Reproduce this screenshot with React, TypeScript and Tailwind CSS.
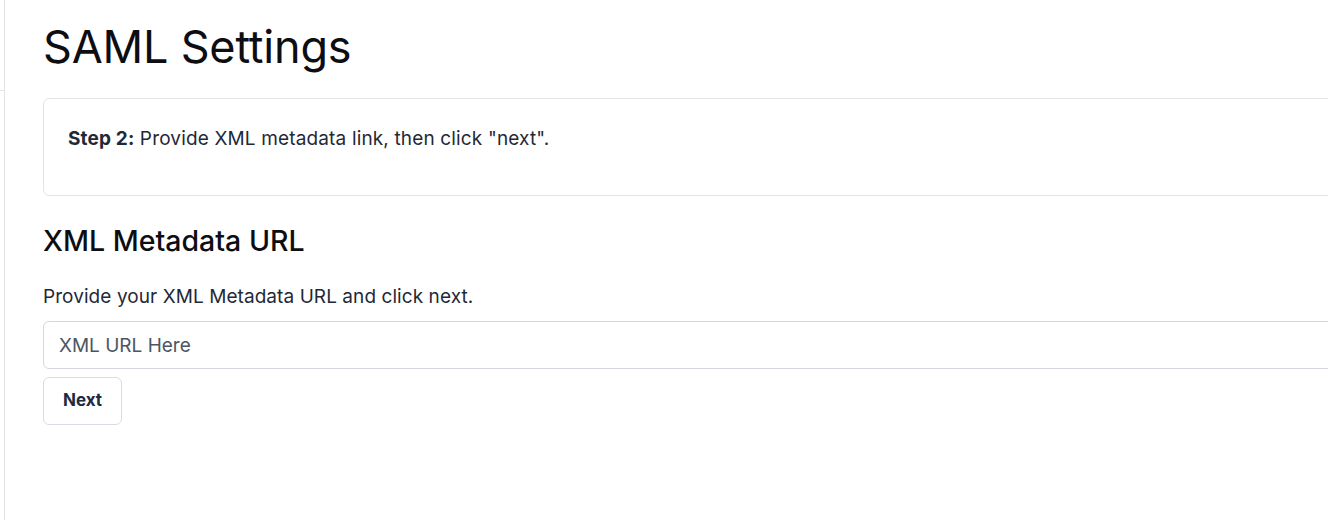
import React from "react";

export default function App() {
  return (
    <div
      className="w-[1328px] h-[520px] overflow-hidden bg-white flex"
      style={{ fontFamily: "Inter, 'Noto Sans', sans-serif" }}
    >
      <div className="w-[5px] shrink-0 border-r border-[#e4e4e7] h-full">
        <div className="h-[91px] border-b border-[#e4e4e7]" />
      </div>
      <div className="shrink-0 w-[1500px] pl-[38px] pt-[19px]">
        <h1 className="text-[45px] leading-[56px] text-[#0d0d12] tracking-[-0.2px]">SAML Settings</h1>
        <div className="mt-[23px] w-[1400px] h-[98px] border border-[#e4e4e7] rounded-[6px] px-[24px] pt-[26px]">
          <p className="text-[19px] leading-[28px] text-[#1f2937] tracking-[0.15px]">
            <b className="font-bold">Step 2:</b> Provide XML metadata link, then click "next".
          </p>
        </div>
        <h2 className="mt-[27px] text-[28.5px] leading-[36px] text-[#0d0d12] font-medium">XML Metadata URL</h2>
        <p className="mt-[25px] text-[19px] leading-[26px] text-[#1f2937] tracking-[0.07px]">Provide your XML Metadata URL and click next.</p>
        <input
          className="mt-[11px] block w-[1400px] h-[48px] border border-[#d4d7dd] rounded-[6px] px-[15px] text-[19px] text-[#1f2937] placeholder:text-[#4b5563] outline-none"
          placeholder="XML URL Here"
        />
        <button className="mt-[8px] h-[48px] w-[79px] border border-[#d9dde3] rounded-[6px] text-[17px] font-bold text-[#1e2b3f] bg-white">
          Next
        </button>
      </div>
    </div>
  );
}
